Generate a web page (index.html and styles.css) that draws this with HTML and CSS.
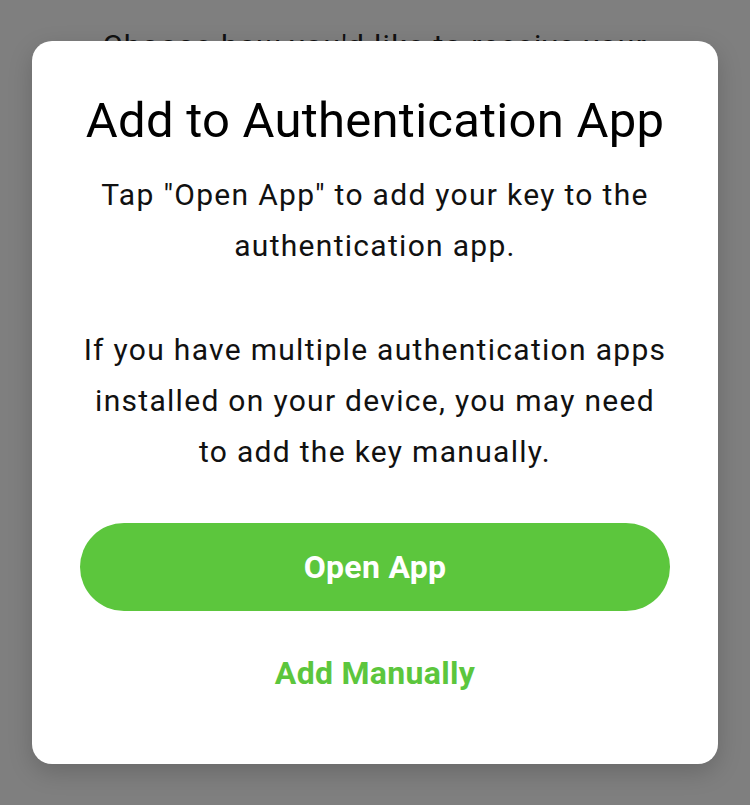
FILE: index.html
```html
<!DOCTYPE html>
<html lang="en">
<head>
<meta charset="utf-8">
<title>Add to Authentication App</title>
<link rel="stylesheet" href="styles.css">
</head>
<body>
<main class="page">
  <p class="page-text">Choose how you'd like to receive your verification codes.</p>
</main>
<div class="overlay">
  <section class="modal" role="dialog" aria-labelledby="modal-title">
    <h1 class="modal-title" id="modal-title">Add to Authentication App</h1>
    <p class="modal-text">Tap "Open App" to add your key to the authentication app.</p>
    <p class="modal-text">If you have multiple authentication apps installed on your device, you may need to add the key manually.</p>
    <div class="actions">
      <button class="btn-primary" type="button">Open App</button>
      <button class="btn-link" type="button">Add Manually</button>
    </div>
  </section>
</div>
</body>
</html>
```
FILE: styles.css
```css
html, body {
  margin: 0;
  padding: 0;
}
body {
  width: 750px;
  height: 805px;
  overflow: hidden;
  font-family: Roboto, "Noto Sans", sans-serif;
  background: #ffffff;
  position: relative;
}
.page {
  padding: 20px 80px 0;
  text-align: center;
}
.page-text {
  margin: 0;
  font-size: 30px;
  line-height: 51px;
  letter-spacing: 1.3px;
  color: #222;
}
.overlay {
  position: absolute;
  inset: 0;
  background: rgba(0, 0, 0, 0.5);
}
.modal {
  position: absolute;
  left: 32px;
  top: 41px;
  width: 686px;
  height: 723px;
  box-sizing: border-box;
  background: #fff;
  border-radius: 20px;
  box-shadow: 0 8px 24px rgba(0, 0, 0, 0.18);
  padding: 52px 30px 0;
  text-align: center;
  display: flex;
  flex-direction: column;
  align-items: center;
}
.modal-title {
  margin: 0;
  font-size: 49px;
  line-height: 56px;
  font-weight: 400;
  letter-spacing: 0.25px;
  color: #000;
}
.modal-text {
  margin: 0;
  max-width: 592px;
  font-size: 30px;
  line-height: 51px;
  letter-spacing: 1.3px;
  color: #111;
  font-weight: 400;
}
.modal-title + .modal-text { margin-top: 20px; }
.modal-text + .modal-text { margin-top: 53px; }
.actions {
  align-self: stretch;
  display: flex;
  flex-direction: column;
  align-items: center;
  margin-top: 46px;
}
.btn-primary {
  width: 590px;
  height: 88px;
  border: none;
  border-radius: 44px;
  background: #5cc63d;
  color: #fff;
  font-family: inherit;
  font-size: 32px;
  letter-spacing: 0.3px;
  font-weight: 700;
  cursor: pointer;
}
.btn-link {
  margin-top: 40px;
  border: none;
  background: none;
  color: #5cc63d;
  font-family: inherit;
  font-size: 32px;
  letter-spacing: 0.3px;
  font-weight: 700;
  padding: 0;
  line-height: 44px;
  cursor: pointer;
}
```
